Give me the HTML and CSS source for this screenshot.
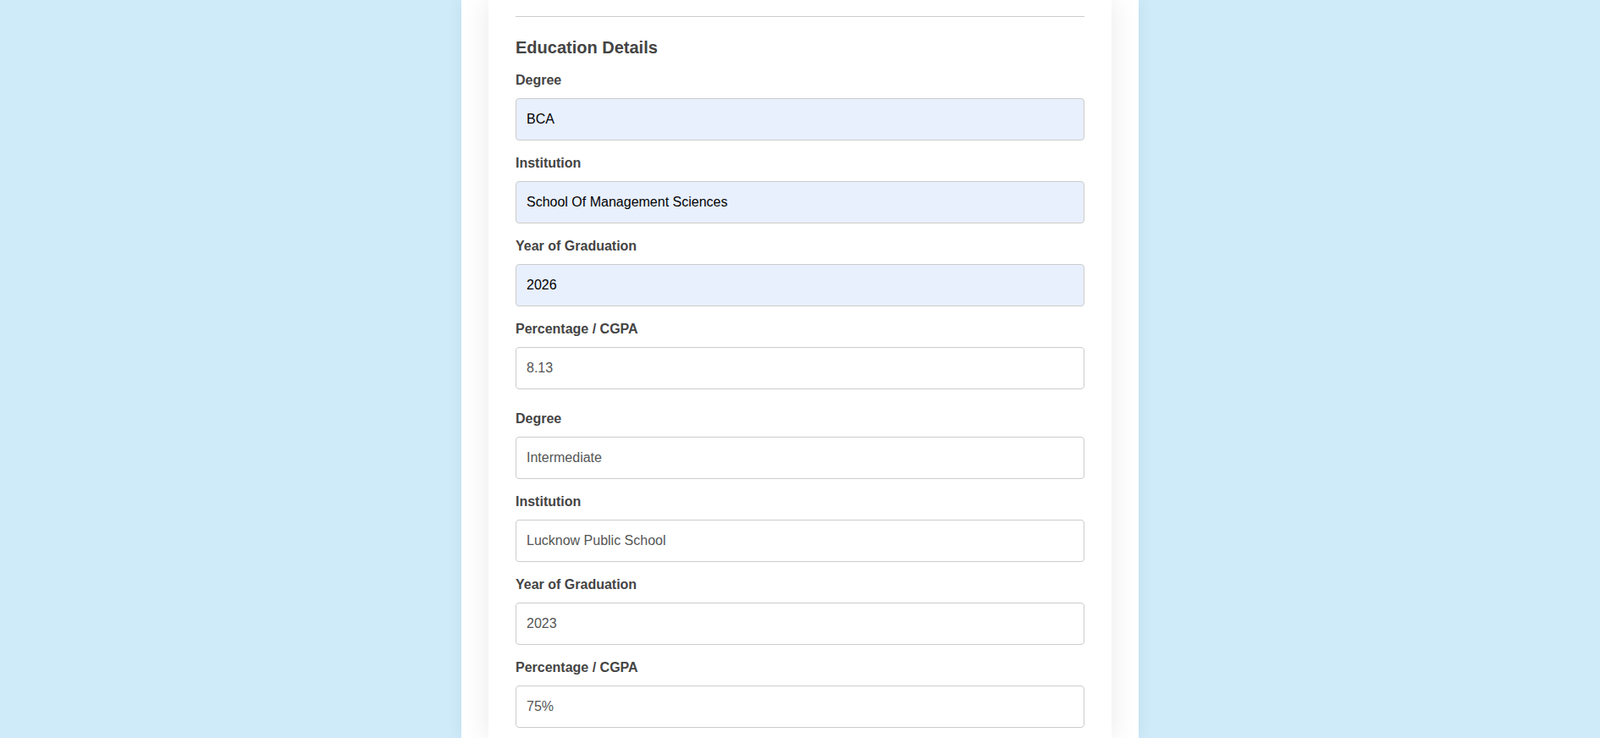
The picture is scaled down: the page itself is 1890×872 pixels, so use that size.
FILE: index.html
```html
<!DOCTYPE html>
<html lang="en">
<head>
<meta charset="utf-8">
<title>Education Details</title>
<link rel="stylesheet" href="styles.css">
</head>
<body>
<div class="page">
  <div class="card">
    <hr class="divider">
    <h3 class="section-title">Education Details</h3>

    <div class="entry">
      <div class="field">
        <label class="field-label">Degree</label>
        <input class="field-input autofilled" type="text" value="BCA" readonly>
      </div>
      <div class="field">
        <label class="field-label">Institution</label>
        <input class="field-input autofilled" type="text" value="School Of Management Sciences" readonly>
      </div>
      <div class="field">
        <label class="field-label">Year of Graduation</label>
        <input class="field-input autofilled" type="text" value="2026" readonly>
      </div>
      <div class="field">
        <label class="field-label">Percentage / CGPA</label>
        <input class="field-input" type="text" value="8.13" readonly>
      </div>
    </div>

    <div class="entry">
      <div class="field">
        <label class="field-label">Degree</label>
        <input class="field-input" type="text" value="Intermediate" readonly>
      </div>
      <div class="field">
        <label class="field-label">Institution</label>
        <input class="field-input" type="text" value="Lucknow Public School" readonly>
      </div>
      <div class="field">
        <label class="field-label">Year of Graduation</label>
        <input class="field-input" type="text" value="2023" readonly>
      </div>
      <div class="field">
        <label class="field-label">Percentage / CGPA</label>
        <input class="field-input" type="text" value="75%" readonly>
      </div>
    </div>
  </div>
</div>
</body>
</html>
```

FILE: styles.css
```css
html, body {
  margin: 0;
  padding: 0;
  height: 872px;
  overflow: hidden;
}

body {
  background: #cfebf9;
  font-family: "Liberation Sans", Arial, sans-serif;
}

.page {
  width: 800px;
  margin: 0 auto;
  background: #ffffff;
  padding: 0 32px;
  box-sizing: border-box;
  height: 872px;
  box-shadow: 0 0 18px rgba(0, 60, 100, 0.08);
}

.card {
  background: #ffffff;
  padding: 19px 32px 12px;
  box-shadow: 0 0 32px rgba(0, 0, 0, 0.09);
  height: 872px;
  box-sizing: border-box;
}

.divider {
  margin: 0;
  height: 0;
  border: 0;
  border-top: 1px solid #cccccc;
}

.section-title {
  margin: 25px 0 18px;
  font-size: 20px;
  font-weight: bold;
  color: #444444;
  line-height: 23px;
}

.entry {
  margin-bottom: 26px;
}

.entry:last-child {
  margin-bottom: 0;
}

.field {
  margin-bottom: 18px;
}

.entry:last-child .field:last-child {
  margin-bottom: 0;
}

.field-label {
  display: block;
  font-size: 16px;
  font-weight: bold;
  color: #444444;
  line-height: 18px;
  margin-bottom: 12px;
}

.field-input {
  display: block;
  width: 100%;
  box-sizing: border-box;
  height: 50px;
  padding: 0 12px;
  font-family: "Liberation Sans", Arial, sans-serif;
  font-size: 16px;
  color: #555555;
  background: #ffffff;
  border: 1px solid #cccccc;
  border-radius: 4px;
  outline: none;
}

.field-input.autofilled {
  background: #e8f0fe;
  color: #000000;
}
```
